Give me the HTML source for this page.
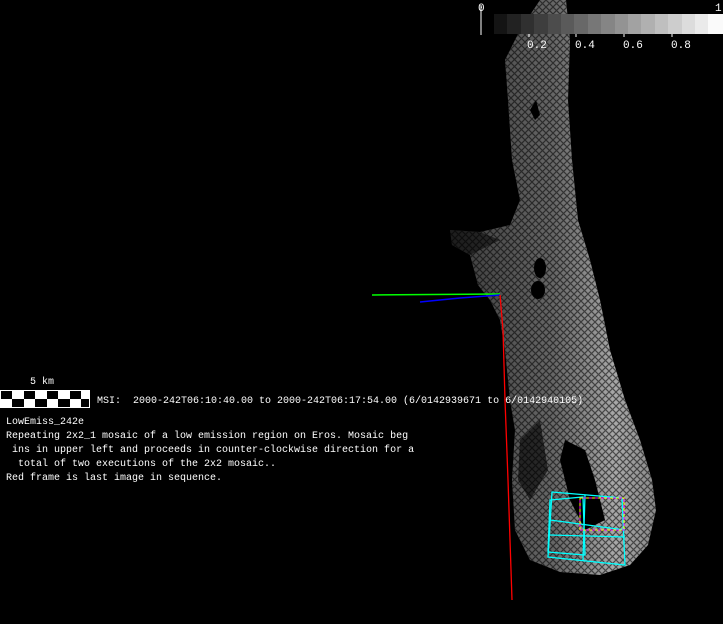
<!DOCTYPE html>
<html><head><meta charset="utf-8"><style>
html,body{margin:0;padding:0;background:#000;width:723px;height:624px;overflow:hidden}
.t{position:absolute;color:#fff;font-family:"Liberation Mono","DejaVu Sans Mono",monospace;font-size:10px;white-space:pre;line-height:14px}
</style></head><body>
<svg width="723" height="624" style="position:absolute;left:0;top:0">
<defs>
<linearGradient id="g" x1="0" x2="1" y1="0" y2="0">
<stop offset="0" stop-color="#3a3a3a"/><stop offset="0.5" stop-color="#666"/><stop offset="0.8" stop-color="#a8a8a8"/><stop offset="1" stop-color="#8a8a8a"/>
</linearGradient>
<pattern id="p" width="7" height="7" patternUnits="userSpaceOnUse"><path d="M0 0L7 7M7 0L0 7" stroke="#000" stroke-width="1.2" opacity="0.55"/></pattern>
</defs>
<g>
<polygon id="s" fill="url(#g)" points="540,0 566,0 570,40 568,100 572,160 578,220 590,260 600,300 610,350 625,400 640,440 652,480 656,510 648,545 630,565 600,575 560,572 530,560 515,530 512,480 515,430 510,400 505,350 500,320 490,300 478,285 470,255 452,245 450,230 480,232 510,225 520,200 512,160 508,100 505,60 520,30"/>
<polygon fill="url(#p)" points="540,0 566,0 570,40 568,100 572,160 578,220 590,260 600,300 610,350 625,400 640,440 652,480 656,510 648,545 630,565 600,575 560,572 530,560 515,530 512,480 515,430 510,400 505,350 500,320 490,300 478,285 470,255 452,245 450,230 480,232 510,225 520,200 512,160 508,100 505,60 520,30"/>
</g>
<ellipse cx="540" cy="268" rx="6" ry="10" fill="#000"/>
<ellipse cx="538" cy="290" rx="7" ry="9" fill="#000"/>
<polygon fill="#000" points="565,440 585,450 595,480 605,520 585,530 570,500 560,460"/>
<polygon fill="#000" opacity="0.6" points="520,440 540,420 548,470 530,500 518,480"/>
<polygon fill="#000" points="530,110 536,100 540,115 535,120"/>
<polygon fill="#000" opacity="0.5" points="450,230 480,232 500,240 470,255 452,245"/>
<line x1="372" y1="295" x2="500" y2="294" stroke="#0f0" stroke-width="1.5"/>
<polyline points="420,302 460,298 500,295" fill="none" stroke="#00f" stroke-width="1.5"/>
<polyline points="500,295 503,330 505,400 508,480 510,540 512,600" fill="none" stroke="#f00" stroke-width="1.3"/>
<g fill="none" stroke="#0ff" stroke-width="1.3">
<polygon points="552,492 622,498 625,565 548,557"/>
<polygon points="550,500 583,497 585,555 548,552"/>
<line x1="550" y1="520" x2="625" y2="530"/>
<line x1="585" y1="495" x2="583" y2="560"/>
<line x1="550" y1="535" x2="625" y2="537"/>
</g>
<rect x="580" y="498" width="44" height="32" fill="none" stroke="#ff0" stroke-width="1" stroke-dasharray="3,3"/>
<rect x="580" y="498" width="44" height="32" fill="none" stroke="#f0f" stroke-width="1" stroke-dasharray="3,3" stroke-dashoffset="3"/>
<g>
<rect x="494" y="14" width="14" height="20" fill="#141414"/><rect x="507" y="14" width="14" height="20" fill="#222"/><rect x="521" y="14" width="14" height="20" fill="#303030"/><rect x="534" y="14" width="14" height="20" fill="#3e3e3e"/><rect x="548" y="14" width="14" height="20" fill="#4c4c4c"/><rect x="561" y="14" width="14" height="20" fill="#5a5a5a"/><rect x="574" y="14" width="14" height="20" fill="#686868"/><rect x="588" y="14" width="14" height="20" fill="#777"/><rect x="601" y="14" width="14" height="20" fill="#858585"/><rect x="615" y="14" width="14" height="20" fill="#939393"/><rect x="628" y="14" width="14" height="20" fill="#a2a2a2"/><rect x="641" y="14" width="14" height="20" fill="#b0b0b0"/><rect x="655" y="14" width="14" height="20" fill="#bfbfbf"/><rect x="668" y="14" width="14" height="20" fill="#cdcdcd"/><rect x="682" y="14" width="14" height="20" fill="#dcdcdc"/><rect x="695" y="14" width="14" height="20" fill="#eaeaea"/><rect x="708" y="14" width="15" height="20" fill="#fafafa"/>
</g>
<line x1="481" y1="5" x2="481" y2="35" stroke="#fff"/>
<g stroke="#fff"><line x1="529" y1="34" x2="529" y2="37"/><line x1="576" y1="34" x2="576" y2="37"/><line x1="624" y1="34" x2="624" y2="37"/><line x1="672" y1="34" x2="672" y2="37"/></g>
<g fill="#fff" font-family="Liberation Mono,monospace" font-size="11">
<text x="478" y="11">0</text><text x="715" y="11">1</text>
<text x="527" y="48">0.2</text><text x="575" y="48">0.4</text><text x="623" y="48">0.6</text><text x="671" y="48">0.8</text>
</g>
<rect x="0" y="390" width="90" height="18" fill="#fff"/>
<g fill="#000">
<rect x="1" y="391" width="11" height="8"/><rect x="24" y="391" width="11" height="8"/><rect x="47" y="391" width="11" height="8"/><rect x="70" y="391" width="11" height="8"/>
<rect x="12" y="399" width="12" height="8"/><rect x="35" y="399" width="12" height="8"/><rect x="58" y="399" width="12" height="8"/><rect x="81" y="399" width="8" height="8"/>
</g>
</svg>
<div class="t" style="left:30px;top:376px">5 km</div>
<div class="t" style="left:97px;top:395px">MSI:  2000-242T06:10:40.00 to 2000-242T06:17:54.00 (6/0142939671 to 6/0142940105)</div>
<div class="t" style="left:6px;top:416px">LowEmiss_242e
Repeating 2x2_1 mosaic of a low emission region on Eros. Mosaic beg
 ins in upper left and proceeds in counter-clockwise direction for a
  total of two executions of the 2x2 mosaic..
Red frame is last image in sequence.</div>
</body></html>
